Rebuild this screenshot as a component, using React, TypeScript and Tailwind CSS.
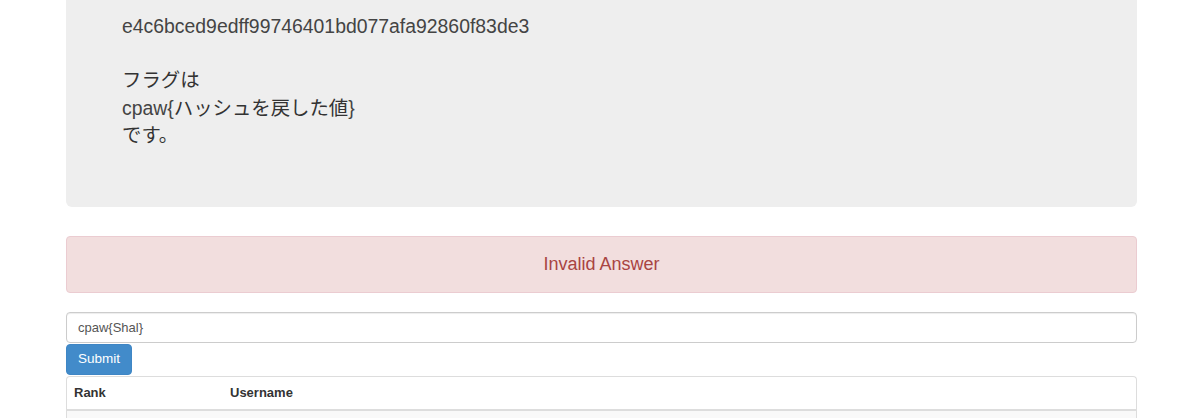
import { useState } from "react";

export default function App() {
  const [answer, setAnswer] = useState("cpaw{Shal}");

  return (
    <div className="min-h-screen bg-white font-['Liberation_Sans','Noto_Sans_CJK_JP',sans-serif] text-[#333]">
      <div className="ml-[66px] w-[1071px]">
        {/* question */}
        <div className="rounded-b-[6px] bg-[#eee] pl-[56px] pt-[13px] pb-[57px]">
          <p className="text-[19.4px] leading-[27px] text-[#444]">
            e4c6bced9edff99746401bd077afa92860f83de3
          </p>
          <p className="mt-[27px] text-[19.4px] leading-[27.5px]">
            フラグは
            <br />
            <span className="text-[#444]">cpaw&#123;</span>ハッシュを戻した値
            <span className="text-[#444]">&#125;</span>
            <br />
            です。
          </p>
        </div>

        {/* result */}
        <div className="mt-[29px] flex h-[57px] items-center justify-center rounded-[4px] border border-[#ebccd1] bg-[#f2dede] text-[18px] text-[#a94442]">
          Invalid Answer
        </div>

        {/* answer form */}
        <form className="mt-[19px]" onSubmit={(e) => e.preventDefault()}>
          <input
            value={answer}
            onChange={(e) => setAnswer(e.target.value)}
            className="block h-[31px] w-full rounded-[4px] border border-[#ccc] px-[11px] text-[13px] text-[#555] shadow-[inset_0_1px_1px_rgba(0,0,0,0.075)] outline-none"
          />
          <button
            type="submit"
            className="mt-px block h-[31px] rounded-[4px] border border-[#3f86c5] bg-[#428bca] px-[11px] text-[13.5px] text-white"
          >
            Submit
          </button>
        </form>

        {/* ranking */}
        <div className="mt-px overflow-hidden rounded-t-[4px] border border-b-0 border-[#ddd]">
          <table className="w-full text-[13px]">
            <thead>
              <tr className="border-b-2 border-[#ddd]">
                <th className="h-[33px] w-[163px] pl-[7px] text-left font-bold">Rank</th>
                <th className="text-left font-bold">Username</th>
              </tr>
            </thead>
            <tbody>
              <tr className="bg-[#f9f9f9]">
                <td className="h-[33px]" />
                <td />
              </tr>
            </tbody>
          </table>
        </div>
      </div>
    </div>
  );
}
